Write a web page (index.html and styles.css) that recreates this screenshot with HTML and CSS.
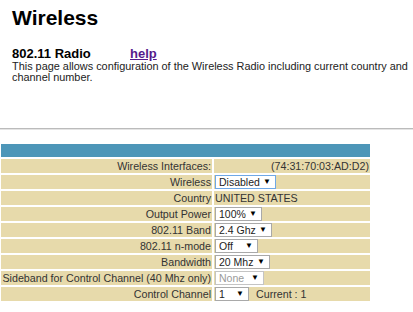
FILE: index.html
```html
<!DOCTYPE html>
<html>
<head>
<meta charset="utf-8">
<link rel="stylesheet" href="styles.css">
</head>
<body>
<div class="intro">
  <h1 class="title">Wireless</h1>
  <div class="sub"><b class="sub-name">802.11 Radio</b><a class="help" href="#">help</a></div>
  <p class="desc">This page allows configuration of the Wireless Radio including current country and channel number.</p>
</div>
<hr class="rule">
<table class="cfg">
  <tr class="hd"><td colspan="2"></td></tr>
  <tr><td class="lbl">Wireless Interfaces:</td><td class="val right">(74:31:70:03:AD:D2)</td></tr>
  <tr><td class="lbl">Wireless</td><td class="val"><span class="sel focus w61">Disabled<i class="arr">▼</i></span></td></tr>
  <tr><td class="lbl">Country</td><td class="val">UNITED STATES</td></tr>
  <tr><td class="lbl">Output Power</td><td class="val"><span class="sel w47">100%<i class="arr">▼</i></span></td></tr>
  <tr><td class="lbl">802.11 Band</td><td class="val"><span class="sel w57">2.4 Ghz<i class="arr">▼</i></span></td></tr>
  <tr><td class="lbl">802.11 n-mode</td><td class="val"><span class="sel w43">Off<i class="arr">▼</i></span></td></tr>
  <tr><td class="lbl">Bandwidth</td><td class="val"><span class="sel w55">20 Mhz<i class="arr">▼</i></span></td></tr>
  <tr><td class="lbl">Sideband for Control Channel (40 Mhz only)</td><td class="val"><span class="sel dis w49">None<i class="arr">▼</i></span></td></tr>
  <tr><td class="lbl">Control Channel</td><td class="val"><span class="sel w34">1<i class="arr">▼</i></span><span class="cur">Current : 1</span></td></tr>
</table>
</body>
</html>
```
FILE: styles.css
```css
html, body {
  margin: 0;
  padding: 0;
  background: #fff;
  font-family: "Liberation Sans", Arial, sans-serif;
  color: #000;
}
.intro {
  padding: 0 0 0 12px;
}
.title {
  font-size: 21px;
  font-weight: bold;
  margin: 0;
  padding-top: 6px;
  line-height: 24px;
}
.sub {
  margin-top: 16px;
  font-size: 13px;
  line-height: 15px;
  display: flex;
}
.sub-name {
  width: 118px;
}
.help {
  color: #551a8b;
  font-weight: bold;
}
.desc {
  margin: 0;
  font-size: 10.9px;
  line-height: 11px;
  color: #222;
}
.rule {
  margin: 45px 0 0 0;
  border: 0;
  border-top: 1px solid #bbb;
  border-bottom: 1px solid #e4e4e4;
  height: 0;
}
.cfg {
  margin: 12px 0 0 -1px;
  border-collapse: separate;
  border-spacing: 2px;
  width: 373px;
  font-size: 10.7px;
  color: #333;
}
.cfg td {
  background: #e7daab;
  padding: 0 1px;
  height: 14px;
  line-height: 14px;
  white-space: nowrap;
}
.cfg .hd td {
  background: #4d96b8;
  height: 13px;
}
.lbl {
  text-align: right;
  width: 209px;
  padding-right: 2px;
}
.val {
  text-align: left;
}
.val.right {
  text-align: right;
}
.sel {
  display: inline-flex;
  align-items: center;
  justify-content: space-between;
  box-sizing: border-box;
  height: 14px;
  vertical-align: top;
  background: #fff;
  border: 1px solid #a9a9a9;
  padding: 0 4px 0 3px;
  color: #222;
  font-size: 10.5px;
  line-height: 12px;
}
.sel.focus {
  border-color: #6fa8e6;
}
.sel.dis {
  color: #9a9a9a;
  border-color: #c4c4c4;
}
.arr {
  font-style: normal;
  font-size: 8px;
  color: #000;
}
.w61 { width: 61px; }
.w47 { width: 47px; }
.w57 { width: 57px; }
.w43 { width: 43px; }
.w55 { width: 55px; }
.w49 { width: 49px; }
.w34 { width: 34px; }
.cur {
  margin-left: 7px;
}
```
